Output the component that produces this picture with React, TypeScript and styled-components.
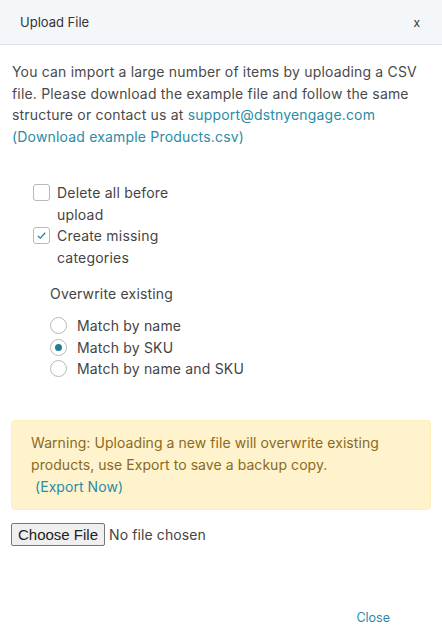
import React from 'react';
import styled, {createGlobalStyle} from 'styled-components';

const GlobalStyle = createGlobalStyle`
  html, body {
    margin: 0;
    padding: 0;
    background: #ffffff;
  }
  body {
    font-family: Inter, "Noto Sans", sans-serif;
    color: #444;
  }
`

const Modal = styled.div`
  width: 442px;
  height: 641px;
  display: flex;
  flex-direction: column;
  background: #fff;
`

const Header = styled.div`
  height: 44px;
  display: flex;
  align-items: center;
  justify-content: space-between;
  padding: 0 20px;
  background: #f4f7fa;
  border-bottom: 1px solid #dde3ea;
`

const Title = styled.div`
  font-size: 13px;
  color: #333;
`

const CloseX = styled.div`
  font-size: 12px;
  color: #333;
  margin-right: 2px;
`

const Body = styled.div`
  flex: 1;
  padding: 16px 11px 0 12px;
  display: flex;
  flex-direction: column;
`

const Intro = styled.div`
  font-size: 14px;
  line-height: 21.5px;
  letter-spacing: 0.18px;
  color: #4a4a4a;
`

const Link = styled.a`
  color: #2a8ca6;
  text-decoration: none;
`

const Options = styled.div`
  margin-top: 35px;
  padding-left: 21px;
  display: flex;
  flex-direction: column;
`

const CheckRow = styled.label`
  display: flex;
  align-items: flex-start;
  gap: 7px;
  font-size: 14px;
  line-height: 21.5px;
  letter-spacing: 0.2px;
  color: #444;
`

const CheckLabel = styled.span`
  width: 140px;
`

const Box = styled.span`
  width: 17px;
  height: 17px;
  margin-top: 2px;
  box-sizing: border-box;
  border: 1px solid #b5b9bd;
  border-radius: 3px;
  display: flex;
  align-items: center;
  justify-content: center;
  flex-shrink: 0;
`

const GroupTitle = styled.div`
  margin-top: 16px;
  padding-left: 17px;
  font-size: 14px;
  line-height: 20px;
  letter-spacing: 0.18px;
  color: #444;
`

const Radios = styled.div`
  margin-top: 11px;
  padding-left: 17px;
  display: flex;
  flex-direction: column;
`

const RadioRow = styled.label`
  display: flex;
  align-items: center;
  gap: 10px;
  font-size: 14px;
  line-height: 21.5px;
  letter-spacing: 0.18px;
  color: #444;
`

const Circle = styled.span<{checked?: boolean}>`
  width: 17px;
  height: 17px;
  box-sizing: border-box;
  border: 1px solid #b5b9bd;
  border-radius: 50%;
  display: flex;
  align-items: center;
  justify-content: center;
  &::after {
    content: '';
    display: ${(props) => props.checked ? 'block' : 'none'};
    width: 7px;
    height: 7px;
    border-radius: 50%;
    background: #1b7f95;
  }
`

const Warning = styled.div`
  margin: 40px 0 0 -1px;
  padding: 11px 20px 11px 19px;
  background: #fff3cd;
  border: 1px solid #ffeeba;
  border-radius: 4px;
  font-size: 14px;
  line-height: 22px;
  letter-spacing: 0.06px;
  color: #8a6a1d;
`

const FileRow = styled.div`
  margin: 13px 0 0 -1px;
`

const FileInput = styled.input`
  font-family: Inter, "Noto Sans", sans-serif;
  font-size: 14px;
  letter-spacing: 0.1px;
  color: #444;
  &::file-selector-button {
    font-family: "Liberation Sans", Arial, sans-serif;
    font-size: 15px;
    letter-spacing: 0;
    color: #222;
    padding: 2px 6px;
    margin-right: 4px;
    background: #efefef;
    border: 1px solid #767676;
    border-radius: 2px;
  }
`

const Footer = styled.div`
  display: flex;
  justify-content: flex-end;
  padding: 0 52px 16px 0;
`

const CloseLink = styled.a`
  font-size: 12.5px;
  color: #2a8ca6;
`

const CheckIcon = () => (
    <svg width="11" height="11" viewBox="0 0 12 12">
        <path d="M2 6.5 L4.8 9 L10 3" fill="none" stroke="#1b7f95" strokeWidth="1.3"/>
    </svg>
)

export default function App() {
    return (
        <>
            <GlobalStyle/>
            <Modal>
                <Header>
                    <Title>Upload File</Title>
                    <CloseX>x</CloseX>
                </Header>
                <Body>
                    <Intro>
                        You can import a large number of items by uploading a CSV file. Please download the example
                        file and follow the same structure or contact us at{' '}
                        <Link href="#">support@dstnyengage.com</Link>
                        <br/>
                        <Link href="#">(Download example Products.csv)</Link>
                    </Intro>

                    <Options>
                        <CheckRow>
                            <Box/>
                            <CheckLabel>Delete all before upload</CheckLabel>
                        </CheckRow>
                        <CheckRow>
                            <Box><CheckIcon/></Box>
                            <CheckLabel>Create missing categories</CheckLabel>
                        </CheckRow>
                        <GroupTitle>Overwrite existing</GroupTitle>
                        <Radios>
                            <RadioRow><Circle/>Match by name</RadioRow>
                            <RadioRow><Circle checked/>Match by SKU</RadioRow>
                            <RadioRow><Circle/>Match by name and SKU</RadioRow>
                        </Radios>
                    </Options>

                    <Warning>
                        Warning: Uploading a new file will overwrite existing products, use Export to save a backup copy.
                        <br/>
                        &nbsp;<Link href="#">(Export Now)</Link>
                    </Warning>

                    <FileRow>
                        <FileInput type="file"/>
                    </FileRow>
                </Body>
                <Footer>
                    <CloseLink>Close</CloseLink>
                </Footer>
            </Modal>
        </>
    );
}
